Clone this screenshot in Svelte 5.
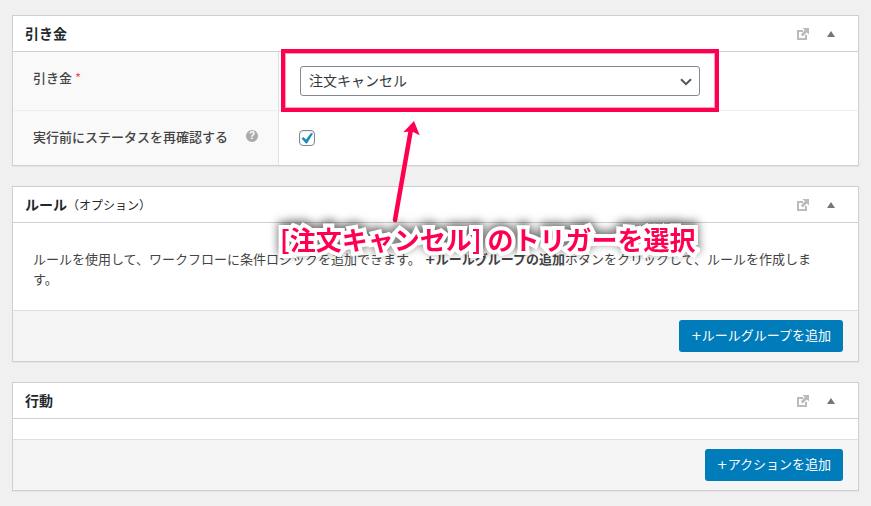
<script>
  let trigger = "cancelled";
  let recheck = true;
  let open = { trigger: true, rules: true, actions: true };

  const toggle = (name) => {
    open[name] = !open[name];
  };
</script>

{#snippet tools(name)}
  <div class="tools">
    <a href="#docs" aria-label="ドキュメント">
      <svg width="12" height="12" viewBox="0 0 12 12">
        <path d="M6 3H1v8h8V7" fill="none" stroke="currentColor" stroke-width="2" />
        <path d="M5.5 0H12v6.5L9.9 4.4 5.7 8.4 3.8 6.5 7.8 2.3z" fill="currentColor" />
      </svg>
    </a>
    <button type="button" class="toggle" aria-label="パネルを切り替え" on:click={() => toggle(name)}>
      <svg class:closed={!open[name]} width="8" height="6" viewBox="0 0 8 6">
        <path d="M4 0l4 6H0z" fill="currentColor" />
      </svg>
    </button>
  </div>
{/snippet}

<main>
  <section class="panel">
    <header>
      <h2>引き金</h2>
      {@render tools("trigger")}
    </header>
    {#if open.trigger}
      <div class="row">
        <div class="etiqueta">
          <label for="trigger">引き金 <span class="required">*</span></label>
        </div>
        <div class="control">
          <div class="select">
            <select id="trigger" bind:value={trigger}>
              <option value="cancelled">注文キャンセル</option>
            </select>
            <svg class="chevron" width="12" height="8" viewBox="0 0 12 8">
              <path d="M1 1.2l5 5 5-5" fill="none" stroke="#555" stroke-width="2" />
            </svg>
            <div class="marco"></div>
            <svg class="arrow" width="30" height="104" viewBox="0 0 30 104">
              <path d="M5 101L20.500 13" stroke="#ff0050" stroke-width="4.500" stroke-linecap="round" />
              <path d="M24 2L13.300 13.200l6.200-.7 3.500.6 6.700 3.100z" fill="#ff0050" />
            </svg>
            <div class="note">[注文キャンセル] のトリガーを選択</div>
          </div>
        </div>
      </div>
      <div class="row">
        <div class="etiqueta">
          <label for="recheck">実行前にステータスを再確認する</label>
          <span class="help">?</span>
        </div>
        <div class="control">
          <input id="recheck" type="checkbox" bind:checked={recheck} />
        </div>
      </div>
    {/if}
  </section>

  <section class="panel">
    <header>
      <h2>ルール<small>（オプション）</small></h2>
      {@render tools("rules")}
    </header>
    {#if open.rules}
      <p>
        ルールを使用して、ワークフローに条件ロジックを追加できます。 <strong>+ルールグループの追加</strong>ボタンをクリックして、ルールを作成します。
      </p>
      <footer>
        <button type="button" class="boton">+ルールグループを追加</button>
      </footer>
    {/if}
  </section>

  <section class="panel">
    <header>
      <h2>行動</h2>
      {@render tools("actions")}
    </header>
    {#if open.actions}
      <div class="vacio"></div>
      <footer>
        <button type="button" class="boton">+アクションを追加</button>
      </footer>
    {/if}
  </section>
</main>

<style>
  :global(body) {
    margin: 0;
    background: #f0f0f1;
  }
  main {
    display: flex;
    flex-direction: column;
    gap: 20px;
    padding: 15px 12px;
    font-family: "Noto Sans CJK JP", sans-serif;
    font-size: 13px;
    line-height: 20px;
    color: #444;
  }
  .panel {
    border: 1px solid #ccd0d4;
    background: #fff;
    box-shadow: 0 1px 1px rgba(0, 0, 0, 0.04);
  }
  header {
    display: flex;
    align-items: center;
    justify-content: space-between;
    height: 35px;
    padding: 0 22px 0 12px;
    border-bottom: 1px solid #ccd0d4;
  }
  h2 {
    margin: 0;
    padding-bottom: 1px;
    font-size: 14px;
    font-weight: 700;
    color: #23282d;
  }
  small {
    font-size: 12px;
    font-weight: 400;
  }
  .tools {
    display: flex;
    align-items: center;
    gap: 17px;
    color: #72777c;
  }
  .tools a {
    display: flex;
    color: #bbb;
  }
  .toggle {
    display: flex;
    padding: 1px;
    border: 0;
    background: none;
    color: #72777c;
  }
  .closed {
    transform: rotate(180deg);
  }
  .row {
    display: grid;
    grid-template-columns: 266px 1fr;
  }
  .row + .row {
    border-top: 1px solid #eee;
  }
  .etiqueta {
    display: flex;
    align-items: flex-start;
    justify-content: space-between;
    padding: 16px 20px;
    box-sizing: border-box;
    border-right: 1px solid #e1e1e1;
    background: #f9f9f9;
    font-weight: 500;
  }
  .required {
    color: #e2584d;
    font-weight: 400;
  }
  .help {
    width: 12px;
    height: 12px;
    margin-top: 3px;
    border-radius: 50%;
    background: #aaa;
    color: #fff;
    font: bold 10px/12px "Liberation Sans", sans-serif;
    text-align: center;
  }
  .control {
    padding: 14px 20px;
  }
  .select {
    position: relative;
    max-width: 400px;
    margin-left: 1px;
  }
  select {
    display: block;
    width: 100%;
    height: 30px;
    padding: 0 24px 2px 8px;
    border: 1px solid #7e8993;
    border-radius: 3px;
    background: #fff;
    color: #32373c;
    font: 14px/26px "Noto Sans CJK JP", sans-serif;
    appearance: none;
  }
  .chevron {
    position: absolute;
    top: 12px;
    right: 8px;
    pointer-events: none;
  }
  .marco {
    position: absolute;
    inset: -17px -19px -16px;
    border: 4px solid #ff0050;
    box-shadow: inset 0 0 0 1px #ffa0c0;
    pointer-events: none;
  }
  .arrow {
    position: absolute;
    top: 53px;
    left: 90px;
  }
  .note {
    position: absolute;
    top: 155px;
    left: -20px;
    color: #ff0050;
    font-size: 26px;
    font-weight: 700;
    line-height: 36px;
    white-space: nowrap;
    -webkit-text-stroke: 8px #fff;
    paint-order: stroke fill;
    stroke-linejoin: round;
    filter: drop-shadow(0 -3px 5px rgba(0, 0, 0, 0.6));
    pointer-events: none;
  }
  input[type="checkbox"] {
    display: block;
    width: 16px;
    height: 16px;
    margin: 5px 0;
    border: 1px solid #7e8993;
    border-radius: 4px;
    background: #fff;
    box-shadow: inset 0 1px 2px rgba(0, 0, 0, 0.1);
    appearance: none;
  }
  input[type="checkbox"]:checked {
    background: #fff url("data:image/svg+xml,%3Csvg xmlns='http://www.w3.org/2000/svg' viewBox='0 0 14 14'%3E%3Cpath d='M1.500 7.500l2-1.500 2.500 2.500L11 2l2 .5L7 12.500H6z' fill='%231e8cbe'/%3E%3C/svg%3E") center / 14px no-repeat;
  }
  p {
    margin: 0;
    padding: 27px 32px 20px 20px;
    font-family: "DejaVu Sans", "Noto Sans CJK JP", sans-serif;
  }
  .vacio {
    height: 20px;
  }
  footer {
    display: flex;
    justify-content: flex-end;
    padding: 9px 15px;
    border-top: 1px solid #dfdfdf;
    background: #f5f5f5;
  }
  .boton {
    height: 32px;
    padding: 0 12px;
    border: 0;
    border-radius: 3px;
    background: #007cba;
    color: #fff;
    font: 13px/32px "DejaVu Sans", "Noto Sans CJK JP", sans-serif;
  }
</style>
